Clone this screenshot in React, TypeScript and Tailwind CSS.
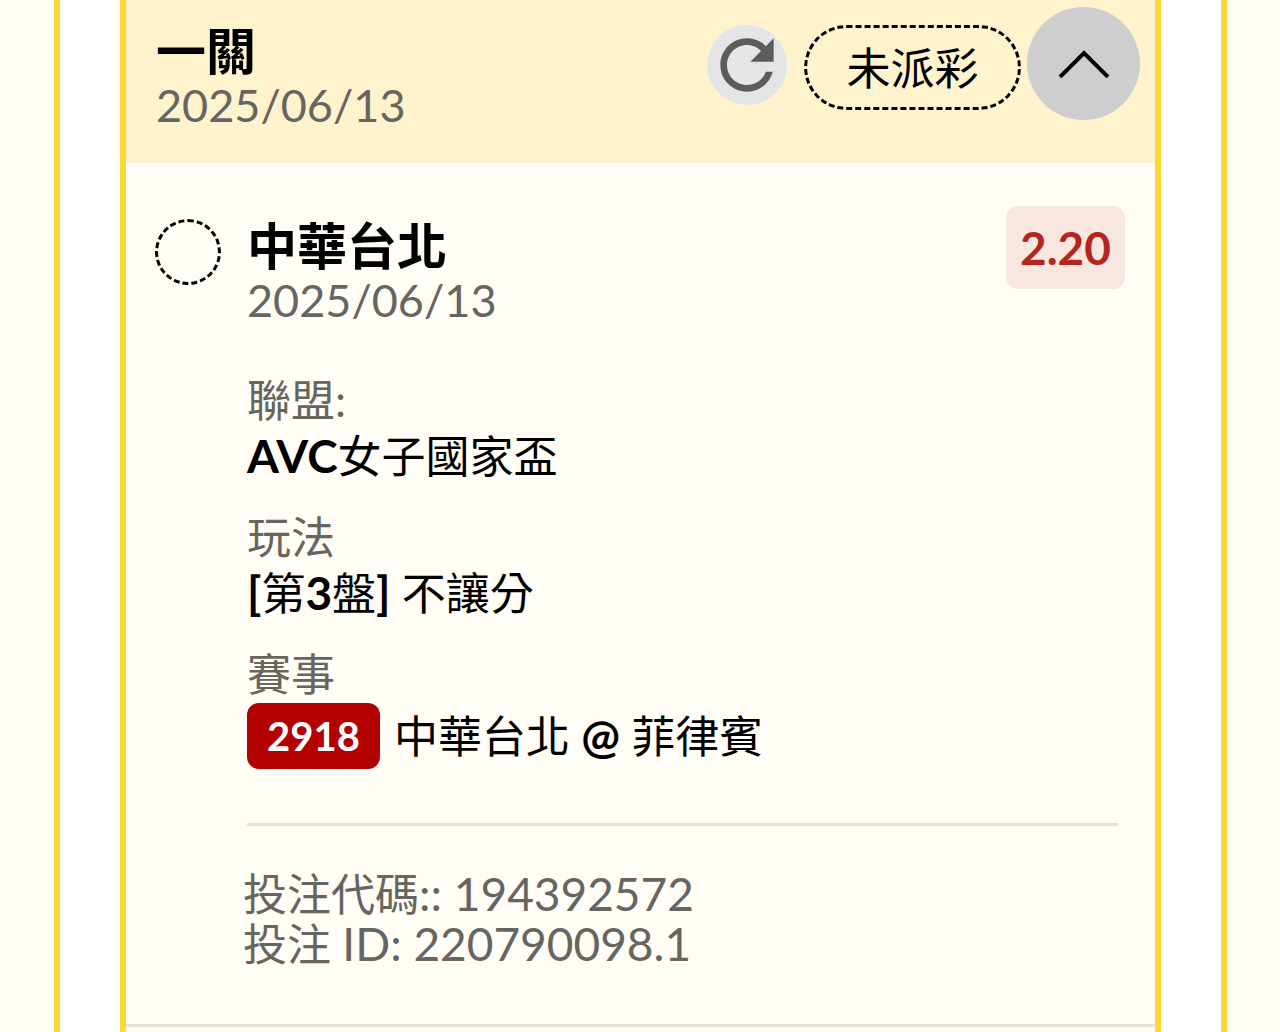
import type { ReactNode } from 'react'

function Latin({ children }: { children: ReactNode }) {
  return <span className="text-[46px]">{children}</span>
}

function Strong({ children }: { children: ReactNode }) {
  return <span className="text-[46px] font-bold">{children}</span>
}

function Heading({ title, date }: { title: string; date: string }) {
  return (
    <div>
      <h2 className="h-[54px] text-[50px] leading-[54px] font-bold text-black">{title}</h2>
      <time className="block h-[54px] text-[45px] leading-[54px]">{date}</time>
    </div>
  )
}

function TicketHeader() {
  return (
    <header className="flex h-[163px] items-start justify-between bg-[#fff3cd] pr-[15px] pl-[30px]">
      <div className="pt-6">
        <Heading title="一關" date="2025/06/13" />
      </div>
      <div className="flex items-center pt-[7px]">
        <button
          type="button"
          aria-label="重新整理"
          className="mt-[3px] mr-[17px] size-20 rounded-full bg-[#e4e5e7]"
        >
          <svg viewBox="0 0 24 24" className="size-20" fill="#5c5c5c">
            <path d="M17.65 6.35C16.2 4.9 14.21 4 12 4c-4.42 0-7.99 3.58-7.99 8s3.57 8 7.99 8c3.73 0 6.84-2.55 7.73-6h-2.08c-.82 2.33-3.04 4-5.65 4-3.31 0-6-2.69-6-6s2.69-6 6-6c1.66 0 3.14.69 4.22 1.78L13 11h7V4l-2.35 2.35z" />
          </svg>
        </button>
        <span className="mt-2 mr-1.5 flex h-[85px] w-[217px] items-center justify-center rounded-full border-3 border-dashed border-black text-[44px] leading-[54px] text-black">
          未派彩
        </span>
        <button
          type="button"
          aria-label="收合"
          className="flex size-[113px] items-center justify-center rounded-full bg-[#cecece]"
        >
          <svg viewBox="0 0 52 28" className="h-7 w-[52px]" fill="none" stroke="#000" strokeWidth="4">
            <path d="M2 27L26 3L50 27" />
          </svg>
        </button>
      </div>
    </header>
  )
}

export default function App() {
  return (
    <div
      lang="zh-Hant"
      className="flex min-h-screen bg-[#fffdf5] pr-[53px] pl-[54px] font-['Lato','Noto_Sans_CJK_TC',sans-serif] text-[#666560]"
    >
      <main className="flex min-w-0 flex-1 border-x-6 border-[#fdd835] bg-white px-[60px]">
        <article className="min-w-0 flex-1 border-x-6 border-[#fdd835] bg-[#fffdf5]">
          <TicketHeader />
          <section className="flex border-b-3 border-[#e6e3dc] pt-[43px] pr-[30px] pb-[55px] pl-[29px]">
            <span className="mt-[13px] mr-[26px] size-[66px] shrink-0 rounded-full border-3 border-dashed border-black" />
            <div className="min-w-0 flex-1">
              <div className="flex items-start justify-between">
                <div className="pt-[13px]">
                  <Heading title="中華台北" date="2025/06/13" />
                </div>
                <span className="flex h-[83px] w-[119px] items-center justify-center rounded-xl bg-[#f8e6e0] text-[46px] leading-[54px] font-bold text-[#b3261e]">
                  2.20
                </span>
              </div>

              <dl className="mt-[46px] mr-[7px] flex flex-col gap-[27px] border-b-3 border-[#e6e3dc] pb-[53px] text-[44px] leading-[55px]">
                <div>
                  <dt className="h-[55px]">聯盟:</dt>
                  <dd className="h-[55px] text-black">
                    <Strong>AVC</Strong>女子國家盃
                  </dd>
                </div>
                <div>
                  <dt className="h-[55px]">玩法</dt>
                  <dd className="h-[55px] text-black">
                    <Strong>[</Strong>第<Strong>3</Strong>盤<Strong>]</Strong> 不讓分
                  </dd>
                </div>
                <div>
                  <dt className="h-[55px]">賽事</dt>
                  <dd className="flex h-[68px] items-center gap-[14px] text-black">
                    <span className="flex h-[66px] w-[133px] items-center justify-center rounded-xl bg-[#b30000] text-[40px] font-bold text-white">
                      2918
                    </span>
                    <span>
                      中華台北 <Strong>@</Strong> 菲律賓
                    </span>
                  </dd>
                </div>
              </dl>

              <div className="-ml-1 pt-[43px] text-[44px] leading-[50px]">
                <p className="h-[50px]">
                  投注代碼<Latin>:: 194392572</Latin>
                </p>
                <p className="h-[50px]">
                  投注 <Latin>ID: 220790098.1</Latin>
                </p>
              </div>
            </div>
          </section>
        </article>
      </main>
    </div>
  )
}
